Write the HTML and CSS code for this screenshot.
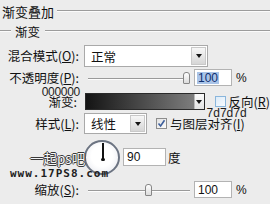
FILE: index.html
```html
<!DOCTYPE html>
<html>
<head>
<meta charset="utf-8">
<link rel="stylesheet" href="styles.css">
</head>
<body>
<div class="panel">
  <div class="legend top"><span class="title">渐变叠加</span><span class="rule"></span></div>
  <div class="legend sub"><span class="rule short"></span><span class="title">渐变</span><span class="rule"></span></div>

  <div class="row r-blend">
    <span class="lbl">混合模式(<u>O</u>):</span>
    <div class="select wide"><span class="val">正常</span><span class="arrow"></span></div>
  </div>

  <div class="row r-opacity">
    <span class="lbl">不透明度(<u>P</u>):</span>
    <div class="slider"><span class="thumb" style="left:95px"></span></div>
    <div class="num"><span class="sel">100</span></div>
    <span class="unit">%</span>
  </div>

  <div class="row r-grad">
    <div class="lbl stack">
      <span class="note n1">000000</span>
      <span class="glabel">渐变:</span>
    </div>
    <div class="gradient"><span class="ramp"></span><span class="arrow"></span></div>
    <div class="stack rstack">
      <span class="chk"><span class="cb hover"></span>反向(<u>R</u>)</span>
      <span class="note n2">7d7d7d</span>
    </div>
  </div>

  <div class="row r-style">
    <span class="lbl">样式(<u>L</u>):</span>
    <div class="select narrow"><span class="val">线性</span><span class="arrow"></span></div>
    <span class="chk align"><span class="cb checked"><svg width="9" height="9" viewBox="0 0 9 9"><path d="M1.5 4.5 L3.6 7 L7.5 1.2" fill="none" stroke="#3d5f9c" stroke-width="1.6"/></svg></span>与图层对齐(<u>I</u>)</span>
  </div>

  <div class="row r-angle">
    <div class="dial"></div>
    <div class="num n90">90</div>
    <span class="deg">度</span>
  </div>

  <div class="row r-scale">
    <span class="lbl">缩放(<u>S</u>):</span>
    <div class="slider"><span class="thumb" style="left:57px"></span></div>
    <div class="num">100</div>
    <span class="unit">%</span>
  </div>

  <div class="wm wm1">一起ps吧</div>
  <div class="wm wm2">www.17PS8.com</div>
</div>
</body>
</html>
```

FILE: styles.css
```css
html, body {
  margin: 0;
  background: #ececec;
}
body {
  font-family: "Noto Sans CJK SC", "Noto Sans", sans-serif;
  font-size: 12.5px;
  color: #111;
}
.panel {
  position: relative;
  width: 270px;
  height: 204px;
  overflow: hidden;
}
u { text-decoration: underline; text-underline-offset: 1px; }

.legend { display: flex; align-items: center; }
.legend.top { height: 22px; padding-left: 2px; }
.legend.top .title { margin-right: 3px; font-size: 13px; }
.legend.sub { height: 18px; }
.legend.sub .title { margin: 0 5px 0 4px; }
.rule {
  flex: 1;
  height: 0;
  border-top: 1px solid #9c9c9c;
  border-bottom: 1px solid #fbfbfb;
}
.rule.short { flex: none; width: 11px; }

.row { display: flex; align-items: center; }
.lbl {
  width: 79px;
  flex: none;
  text-align: right;
  white-space: nowrap;
  line-height: 14px;
}

.r-blend { margin-top: 5px; height: 22px; }
.r-opacity { height: 21px; }
.r-grad { height: 25px; align-items: flex-start; }
.r-style { height: 21px; }
.r-angle { height: 46px; padding-left: 84px; }
.r-scale { height: 19px; }

.select {
  height: 22px;
  box-sizing: border-box;
  background: #fff;
  border: 1px solid #a9a9a9;
  display: flex;
  align-items: center;
  margin-left: 5px;
}
.select .val { flex: 1; padding-left: 6px; }
.select.wide { width: 124px; }
.select.narrow { width: 63px; height: 21px; }
.arrow {
  width: 15px;
  align-self: stretch;
  box-sizing: border-box;
  margin: 1px;
  background: linear-gradient(#f7f7f7, #d6d6d6);
  border: 1px solid #c9c9c9;
  display: flex;
  align-items: center;
  justify-content: center;
}
.arrow::after {
  content: "";
  border-left: 3.5px solid transparent;
  border-right: 3.5px solid transparent;
  border-top: 4px solid #151515;
}

.slider {
  position: relative;
  width: 102px;
  height: 12px;
  margin-left: 9px;
}
.slider::before {
  content: "";
  position: absolute;
  left: 0;
  right: 0;
  top: 6px;
  border-top: 1px solid #9a9a9a;
  border-bottom: 1px solid #fdfdfd;
}
.thumb {
  position: absolute;
  top: 0;
  width: 5px;
  height: 10px;
  border: 1px solid #868686;
  border-radius: 3px 3px 1px 1px;
  background: linear-gradient(#ffffff, #dcdcdc);
}

.num {
  width: 38px;
  height: 17px;
  box-sizing: border-box;
  background: #fff;
  border: 1px solid #b3b3b3;
  margin-left: 4px;
  display: flex;
  align-items: center;
  padding-left: 3px;
  font-family: "Liberation Sans", Arial, sans-serif;
  font-size: 12px;
}
.sel {
  background: #a9c4e8;
  color: #0f2f6e;
  padding: 0 1px;
  margin-left: -1px;
  line-height: 12px;
}
.unit {
  margin-left: 4px;
  font-family: "Liberation Sans", Arial, sans-serif;
  font-size: 12px;
}

.stack { display: flex; flex-direction: column; }
.lbl.stack { align-items: flex-end; }
.note {
  font-family: "Liberation Sans", Arial, sans-serif;
  font-size: 12px;
  line-height: 9px;
  color: #1c1c1c;
}
.n1 { margin-right: -1px; letter-spacing: -0.3px; }
.glabel { line-height: 12px; margin-top: -1px; margin-right: 2px; }

.gradient {
  display: flex;
  width: 122px;
  height: 17px;
  box-sizing: border-box;
  margin: 5px 0 0 6px;
  border: 1px solid #2a2a2a;
  background: #fff;
}
.ramp {
  flex: 1;
  background: linear-gradient(to right, #141414, #7d7d7d);
}
.gradient .arrow { width: 10px; margin: 0; border: none; border-left: 1px solid #bbb; background: linear-gradient(#fafafa, #e4e4e4); }

.rstack { margin-left: 10px; }
.chk {
  display: flex;
  align-items: center;
  line-height: 11px;
  white-space: nowrap;
}
.rstack .chk { margin-top: 8px; }
.cb {
  width: 11px;
  height: 11px;
  box-sizing: border-box;
  margin-right: 3px;
  display: flex;
  align-items: center;
  justify-content: center;
}
.cb.hover {
  border: 1px solid #8ab6dc;
  background: linear-gradient(135deg, #dcebf8, #f7fbff);
}
.cb.checked {
  border: 1px solid #8d8d8d;
  background: linear-gradient(135deg, #e2e2e2, #fbfbfb);
}
.n2 { margin-left: -8px; margin-top: 1px; line-height: 10px; }
.chk.align { margin-left: 9px; }

.dial {
  position: relative;
  width: 36px;
  height: 35px;
  box-sizing: border-box;
  border-radius: 50%;
  border: 2px solid #6c7482;
  background: radial-gradient(circle at 50% 45%, #ffffff 45%, #e3e5ec 100%);
}
.dial::before {
  content: "";
  position: absolute;
  left: 16px;
  top: 1px;
  width: 1.5px;
  height: 16px;
  background: #111;
}
.dial::after {
  content: "";
  position: absolute;
  left: 15px;
  top: 16px;
  width: 3.5px;
  height: 3.5px;
  border-radius: 50%;
  background: #111;
}
.num.n90 { width: 43px; height: 18px; margin-left: 3px; }
.deg { margin-left: 2px; }

.wm {
  position: absolute;
  z-index: 2;
  white-space: nowrap;
}
.wm1 {
  left: 30px;
  top: 148px;
  font-size: 13.5px;
  line-height: 20px;
  color: #f6f6f6;
  text-shadow: 1px 0 #3a3a3a, -1px 0 #3a3a3a, 0 1px #3a3a3a, 0 -1px #3a3a3a;
}
.wm2 {
  left: 10px;
  top: 168px;
  font-family: "DejaVu Sans Mono", monospace;
  font-weight: bold;
  font-size: 11px;
  line-height: 12px;
  letter-spacing: 1px;
  color: #1d1d1d;
}
```
